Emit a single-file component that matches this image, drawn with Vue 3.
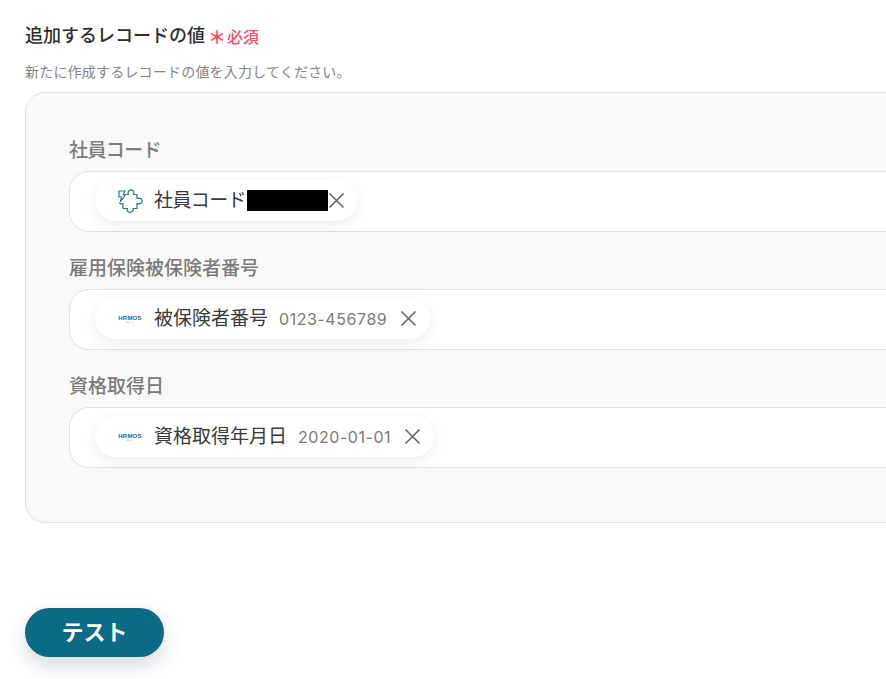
<script setup>
const fields = [
  { label: '社員コード', name: '社員コード', value: '', redacted: true, icon: 'puzzle' },
  { label: '雇用保険被保険者番号', name: '被保険者番号', value: '0123-456789', icon: 'logo' },
  { label: '資格取得日', name: '資格取得年月日', value: '2020-01-01', icon: 'logo' },
]
</script>

<template>
  <main class="page">
    <div class="title-row">
      <h2 class="title">追加するレコードの値</h2>
      <span class="star">＊</span>
      <span class="required">必須</span>
    </div>
    <p class="desc">新たに作成するレコードの値を入力してください。</p>
    <section class="panel">
      <div v-for="f in fields" :key="f.label" class="field">
        <label class="label" :class="{ tight: f.redacted }">{{ f.label }}</label>
        <div class="input">
          <div class="chip" :class="{ 'chip-redacted': f.redacted }">
            <span class="icon">
              <svg v-if="f.icon === 'puzzle'" width="26" height="24" viewBox="0 0 26 24" fill="none" stroke="#1f7a95" stroke-width="1.2" stroke-linejoin="round" stroke-linecap="round">
                <path d="M9 5.5H11.5C10.5 3 11.5 .8 14 .8S17.5 3 16.5 5.5H20V9.5C22 8.5 25.2 9.2 25.2 12S22 15.5 20 14.5V19.5H16C17 21.5 15.5 23.3 13 23.3S9.5 21.5 10.5 19.5H6V14.5C5 15 3.5 15 2.5 14" />
                <path d="M2 2H8L6.2 6H8.5L3.5 12.5L4.6 8H2Z" />
              </svg>
              <span v-else class="logo">HRMOS<small class="logo-sub">タレント</small></span>
            </span>
            <span class="name" :class="{ tight: f.redacted }">{{ f.name }}</span>
            <span v-if="f.redacted" class="redacted"></span>
            <span v-else class="value">{{ f.value }}</span>
            <svg class="close" width="17" height="17" viewBox="0 0 17 17" stroke="#666" stroke-width="1.6" fill="none">
              <path d="M1.5 1.5l14 14M15.5 1.5l-14 14" />
            </svg>
          </div>
        </div>
      </div>
    </section>
    <button class="test" type="button">テスト</button>
  </main>
</template>

<style>
html, body {
  margin: 0;
  background: #fff;
  overflow: hidden;
}
</style>

<style scoped>
.page {
  box-sizing: border-box;
  width: 886px;
  height: 679px;
  padding: 23px 0 0 25px;
  overflow: hidden;
  font-family: Inter, "Noto Sans CJK JP", sans-serif;
  color: #2e2e2e;
}
.title-row {
  display: flex;
  align-items: center;
  height: 26px;
}
.title {
  margin: 0;
  font-size: 18px;
  font-weight: 500;
  line-height: 26px;
  color: #2e2e2e;
}
.star {
  margin-left: 3px;
  font-size: 18px;
  font-weight: 700;
  line-height: 26px;
  height: 26px;
  position: relative;
  top: 2px;
  color: #ff4d63;
}
.required {
  margin-left: 1px;
  font-size: 16px;
  font-weight: 500;
  color: #ff4d63;
}
.desc {
  margin: 14px 0 0;
  font-size: 14px;
  letter-spacing: 0.2px;
  line-height: 18px;
  color: #858585;
}
.panel {
  box-sizing: border-box;
  width: 940px;
  height: 431px;
  margin-top: 11px;
  padding: 46px 0 0 43px;
  background: #f9f9f9;
  border: 1px solid #e2e2e6;
  border-radius: 20px;
}
.field + .field {
  margin-top: 25px;
}
.label {
  display: block;
  height: 24px;
  font-size: 19px;
  font-weight: 500;
  line-height: 24px;
  color: #7b7b7b;
}
.input {
  box-sizing: border-box;
  display: flex;
  align-items: center;
  width: 860px;
  height: 61px;
  margin-top: 8px;
  padding: 0 0 2px 25px;
  background: #fff;
  border: 1px solid #e0e0e6;
  border-radius: 20px;
}
.chip {
  display: flex;
  align-items: center;
  height: 41px;
  padding: 0 13px 0 20px;
  background: #fff;
  border-radius: 21px;
  box-shadow: 0 4px 14px rgba(0, 0, 0, 0.08);
}
.chip-redacted {
  padding-right: 12px;
}
.icon {
  display: flex;
  align-items: center;
  justify-content: center;
  width: 30px;
  height: 30px;
  flex: none;
}
.logo {
  display: flex;
  flex-direction: column;
  align-items: center;
  font-family: "Liberation Sans", sans-serif;
  font-size: 6px;
  font-weight: 700;
  line-height: 6px;
  letter-spacing: 0.2px;
  color: #22669a;
}
.logo-sub {
  font-size: 2px;
  line-height: 2px;
  color: #7d9fb8;
}
.name {
  margin-left: 9px;
  font-size: 19px;
  line-height: 24px;
  color: #3a3a3a;
  white-space: nowrap;
}
.tight {
  letter-spacing: -0.6px;
}
.value {
  margin-left: 11px;
  font-size: 16px;
  letter-spacing: 0.55px;
  color: #7a7a7a;
  white-space: nowrap;
}
.redacted {
  width: 81px;
  height: 21px;
  margin-left: 1px;
  background: #000;
}
.close {
  margin-left: 13px;
  flex: none;
}
.chip-redacted .close {
  margin-left: 0;
}
.test {
  display: block;
  width: 139px;
  height: 49px;
  margin-top: 85px;
  padding: 0 0 5px;
  border: 0;
  border-radius: 25px;
  background: #0b6a84;
  color: #fff;
  font-family: inherit;
  font-size: 22px;
  font-weight: 700;
  box-shadow: 0 8px 20px rgba(40, 70, 90, 0.2);
}
</style>
